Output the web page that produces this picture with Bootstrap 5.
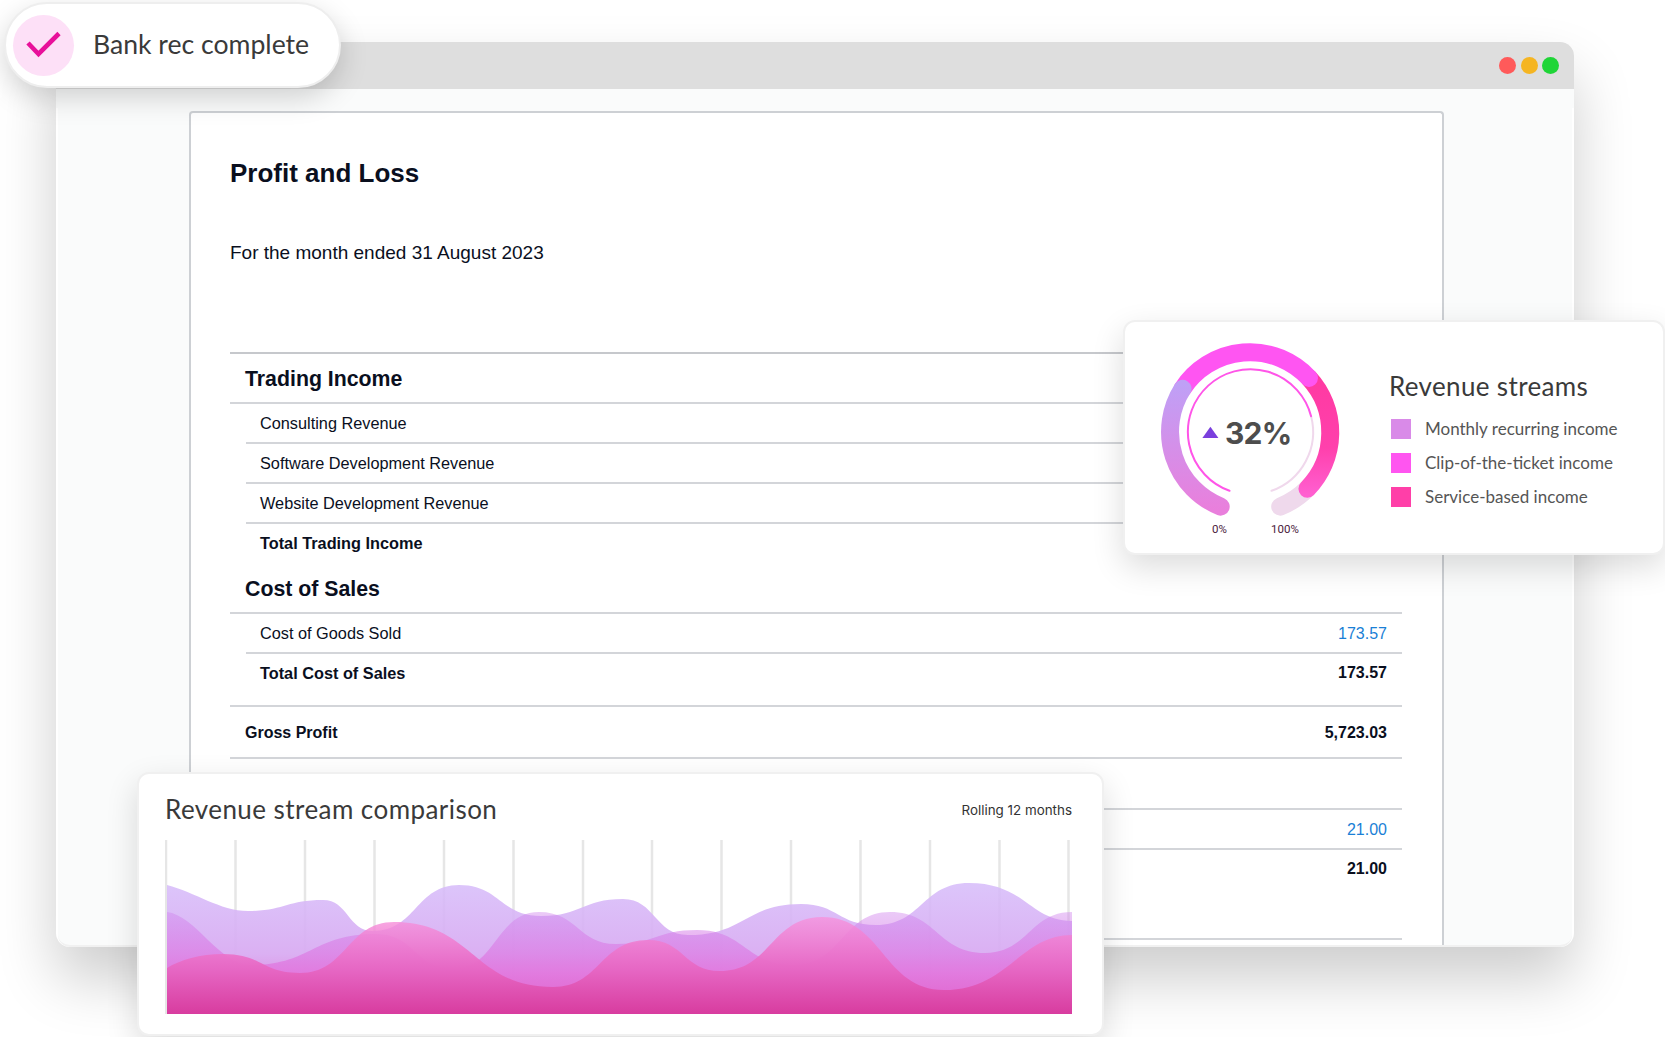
<!DOCTYPE html>
<html lang="en">
<head>
<meta charset="utf-8">
<title>Profit and Loss</title>
<link href="https://cdn.jsdelivr.net/npm/bootstrap@5.3.0/dist/css/bootstrap.min.css" rel="stylesheet">
<style>
html,body{background:#fff;margin:0}
body{font-family:"Liberation Sans",Arial,sans-serif;color:#0a0f1e;overflow:hidden}
.stage{position:relative;width:1665px;height:1037px;padding:42px 91px 0 56px;overflow:hidden}
.win{width:1518px;height:905px}
.win-shell{height:905px;border-radius:14px;box-shadow:0 32px 60px rgba(0,0,0,.2)}
.win-bar{height:47px;background:#dedede;border-radius:14px 14px 0 0;padding-right:15px}
.dot{width:17px;height:17px;border-radius:50%;margin-left:4.5px}
.d-red{background:#ff5a5a}.d-amber{background:#f5b522}.d-green{background:#1fd537}
.win-strip{height:19px;background:#fafbfb}
.win-body{height:839px;margin:0 2px;background:#fafbfb;border-radius:0 0 12px 12px;padding:3px 128px 0 131px;border-bottom:2px solid #f1f1f1}
.sheet{height:834px;background:#fff;border:2px solid #cdd0d4;border-bottom:0;border-radius:4px 4px 0 0;padding:0 40px 0 39px;overflow:hidden}
.sheet-title{font-size:26px;line-height:34px;font-weight:700;margin:43px 0 0}
.sheet-sub{font-size:19px;line-height:24px;margin:51px 0 87px}
.sec-head{height:50px;padding:3px 16px 0 15px;font-size:21.3px;font-weight:700;border-bottom:2px solid #d3d5d9}
.sec-first{height:52px;border-top:2px solid #c6c8cc}
.sec-plain{height:51px}
.line{height:40px;margin-left:16px;padding:1px 15px 0 14px;font-size:16.3px;border-bottom:2px solid #d3d5d9}
.line-total{font-weight:700;border-bottom:0;padding-top:0;padding-bottom:2px}
.amt{font-size:16px}
.gross{height:54px;margin-top:11px;padding:2px 15px 0 15px;font-size:16px;font-weight:700;border-top:2px solid #d3d5d9;border-bottom:2px solid #d3d5d9}
.amt-link{color:#1a7fd6}
.end-rule{height:2px;background:#d3d5d9;margin-top:48px}
.rounded-font{font-family:"Lato","Noto Sans",sans-serif}
.pill{position:absolute;left:4px;top:2px;width:337px;height:86px;background:#fff;border:2px solid #eee;border-radius:43px;padding-left:7px;box-shadow:0 10px 28px rgba(0,0,0,.17);gap:19px}
.pill-badge{width:61px;height:61px;border-radius:50%;background:#fde0f7}
.pill-text{font-size:26.6px;line-height:1;color:#3a3a3a;padding-bottom:2px}
.float-panel{position:absolute;background:#fff;border:2px solid #f0f0f0;border-radius:12px;box-shadow:0 12px 32px rgba(0,0,0,.14)}
.donut-panel{left:1123px;top:320px;width:542px;height:235px}
.donut-info{padding:45px 0 0 13px}
.donut-title{font-size:26px;line-height:38px;color:#3a3a3a;letter-spacing:.35px;margin:0 0 7px;font-weight:400}
.key{height:34px;gap:14px;margin-left:2px;font-size:17px;color:#555}
.swatch{width:20px;height:20px}
.sw-a{background:#d98ae8}.sw-b{background:#ff55f0}.sw-c{background:#ff3fa8}
.chart-panel{left:137px;top:772px;width:967px;height:264px;padding:16px 30px 0 26px}
.chart-head{height:40px;margin-bottom:10px}
.chart-title{font-size:26px;color:#3a3a3a;letter-spacing:.44px;margin:0;font-weight:400}
.chart-note{font-family:"Inter",sans-serif;font-size:13.4px;color:#333}
.chart-svg{display:block}
</style>
</head>
<body>
<div class="stage">
  <div class="win">
    <div class="win-shell">
      <div class="win-bar d-flex align-items-center justify-content-end">
        <span class="dot d-red"></span><span class="dot d-amber"></span><span class="dot d-green"></span>
      </div>
      <div class="win-strip"></div>
      <div class="win-body">
        <div class="sheet">
          <h1 class="sheet-title">Profit and Loss</h1>
          <p class="sheet-sub">For the month ended 31 August 2023</p>
          <div class="sec-head sec-first d-flex align-items-center">Trading Income</div>
          <div class="line d-flex align-items-center justify-content-between"><span>Consulting Revenue</span></div>
          <div class="line d-flex align-items-center justify-content-between"><span>Software Development Revenue</span></div>
          <div class="line d-flex align-items-center justify-content-between"><span>Website Development Revenue</span></div>
          <div class="line line-total d-flex align-items-center justify-content-between"><span>Total Trading Income</span></div>
          <div class="sec-head d-flex align-items-center">Cost of Sales</div>
          <div class="line d-flex align-items-center justify-content-between"><span>Cost of Goods Sold</span><span class="amt amt-link">173.57</span></div>
          <div class="line line-total d-flex align-items-center justify-content-between"><span>Total Cost of Sales</span><span class="amt">173.57</span></div>
          <div class="gross d-flex align-items-center justify-content-between"><span>Gross Profit</span><span>5,723.03</span></div>
          <div class="sec-head sec-plain"></div>
          <div class="line d-flex align-items-center justify-content-end"><span class="amt amt-link">21.00</span></div>
          <div class="line line-total d-flex align-items-center justify-content-end"><span class="amt">21.00</span></div>
          <div class="end-rule"></div>
        </div>
      </div>
    </div>
  </div>

  <div class="pill rounded-font d-flex align-items-center">
    <div class="pill-badge d-flex align-items-center justify-content-center flex-shrink-0">
      <svg width="36" height="28" viewBox="0 0 36 28"><polyline points="2,12 12.5,23 33,2.5" fill="none" stroke="#e8109a" stroke-width="4.6"/></svg>
    </div>
    <span class="pill-text">Bank rec complete</span>
  </div>

  <div class="float-panel donut-panel rounded-font d-flex">
    <svg class="flex-shrink-0" width="251" height="230" viewBox="1125 323 251 230" role="img" aria-label="Revenue gauge">
      <defs>
        <linearGradient id="gPurple" gradientUnits="userSpaceOnUse" x1="0" y1="385" x2="0" y2="510"><stop offset="0" stop-color="#bfa0f6"/><stop offset="1" stop-color="#e97fdc"/></linearGradient>
        <linearGradient id="gPink" gradientUnits="userSpaceOnUse" x1="0" y1="379" x2="0" y2="495"><stop offset="0" stop-color="#ff3aa2"/><stop offset=".6" stop-color="#ff40ac"/><stop offset="1" stop-color="#ff5fd0"/></linearGradient>
      </defs>
      <g fill="none" stroke-width="18" stroke-linecap="round">
        <path d="M1307.4 489.7A80.5 80.5 0 0 1 1280.2 507.6" stroke="#efd9ec"/>
        <path d="M1309 379A80.5 80.5 0 0 1 1307.4 489.7" stroke="url(#gPink)"/>
        <path d="M1182.5 389.8A80.5 80.5 0 0 1 1309 379" stroke="#ff55f2"/>
        <path d="M1220.7 507.6A80.5 80.5 0 0 1 1182.5 389.8" stroke="url(#gPurple)"/>
      </g>
      <g fill="none" stroke-width="2" stroke-linecap="round">
        <path d="M1311.1 417.2A62.6 62.6 0 0 1 1271.5 491.8" stroke="#f0d8ec"/>
        <path d="M1229.5 491.8A62.6 62.6 0 1 1 1311.1 417.2" stroke="#ff55e8"/>
      </g>
      <polygon points="1202.4,439 1218.4,439 1210.4,427.7" fill="#7a3fdd"/>
      <text x="1225" y="445" font-family="Inter,sans-serif" font-weight="700" font-size="30" letter-spacing="-.8" fill="#4d4d4d">32%</text>
      <text x="1212" y="534" font-family="Roboto,sans-serif" font-size="11.5" fill="#4a1a3c">0%</text>
      <text x="1271" y="534" font-family="Roboto,sans-serif" font-size="11.5" fill="#4a1a3c">100%</text>
    </svg>
    <div class="donut-info">
      <h2 class="donut-title">Revenue streams</h2>
      <div class="key d-flex align-items-center"><span class="swatch sw-a"></span><span>Monthly recurring income</span></div>
      <div class="key d-flex align-items-center"><span class="swatch sw-b"></span><span>Clip-of-the-ticket income</span></div>
      <div class="key d-flex align-items-center"><span class="swatch sw-c"></span><span>Service-based income</span></div>
    </div>
  </div>

  <div class="float-panel chart-panel rounded-font">
    <div class="chart-head d-flex align-items-center justify-content-between">
      <h2 class="chart-title">Revenue stream comparison</h2>
      <span class="chart-note">Rolling 12 months</span>
    </div>
    <svg class="chart-svg" width="907" height="174" viewBox="165 840 907 174" role="img" aria-label="Area chart">
      <defs>
        <linearGradient id="a1" gradientUnits="userSpaceOnUse" x1="0" y1="880" x2="0" y2="1014"><stop offset="0" stop-color="#d6bcfa" stop-opacity=".85"/><stop offset=".55" stop-color="#d9acf2" stop-opacity=".95"/><stop offset="1" stop-color="#e070d0"/></linearGradient>
        <linearGradient id="a2" gradientUnits="userSpaceOnUse" x1="0" y1="910" x2="0" y2="1014"><stop offset="0" stop-color="#cf84ee" stop-opacity=".42"/><stop offset=".6" stop-color="#e36fdc" stop-opacity=".72"/><stop offset="1" stop-color="#e060c8" stop-opacity=".9"/></linearGradient>
        <linearGradient id="a3" gradientUnits="userSpaceOnUse" x1="0" y1="915" x2="0" y2="1014"><stop offset="0" stop-color="#f892dc" stop-opacity=".75"/><stop offset=".55" stop-color="#e667c4"/><stop offset="1" stop-color="#d83c9f"/></linearGradient>
      </defs>
      <g stroke="#e6e6e6" stroke-width="2.5">
        <line x1="166" y1="840" x2="166" y2="1014"/><line x1="235.5" y1="840" x2="235.5" y2="1014"/><line x1="305" y1="840" x2="305" y2="1014"/><line x1="374.5" y1="840" x2="374.5" y2="1014"/><line x1="444" y1="840" x2="444" y2="1014"/><line x1="513.5" y1="840" x2="513.5" y2="1014"/><line x1="583" y1="840" x2="583" y2="1014"/><line x1="652" y1="840" x2="652" y2="1014"/><line x1="721.5" y1="840" x2="721.5" y2="1014"/><line x1="791" y1="840" x2="791" y2="1014"/><line x1="860.5" y1="840" x2="860.5" y2="1014"/><line x1="930" y1="840" x2="930" y2="1014"/><line x1="999.5" y1="840" x2="999.5" y2="1014"/><line x1="1068.5" y1="840" x2="1068.5" y2="1014"/>
      </g>
      <path fill="url(#a1)" d="M167 885C195 892 220 911 248 911C285 911 286 900 323 900C348 900 348 931 373 931C416 931 416 885 459 885C500 885 500 916 541 916C582 916 582 899 623 899C655 899 655 935 688 935C745 935 745 904 801 904C838 904 838 925 876 925C922 925 922 883 969 883C1025 883 1030 921 1072 921V1014H167Z"/>
      <path fill="url(#a2)" d="M167 912C195 915 220 965 250 965C312 965 312 934 376 934C415 934 415 969 453 969C496 969 496 912 539 912C578 912 578 944 616 944C656 944 656 930 697 930C745 930 745 965 794 965C842 965 842 912 890 912C937 912 937 953 985 953C1028 953 1030 912 1072 912V1014H167Z"/>
      <path fill="url(#a3)" d="M167 968C180 960 200 954 223 954C262 954 262 973 300 973C347 973 347 922 394 922C473 922 473 987 553 987C600 987 600 940 648 940C684 940 684 971 720 971C771 971 771 917 822 917C883 917 883 990 944 990C1008 990 1020 935 1072 935V1014H167Z"/>
    </svg>
  </div>
</div>
<script src="https://cdn.jsdelivr.net/npm/bootstrap@5.3.0/dist/js/bootstrap.bundle.min.js"></script>
</body>
</html>
